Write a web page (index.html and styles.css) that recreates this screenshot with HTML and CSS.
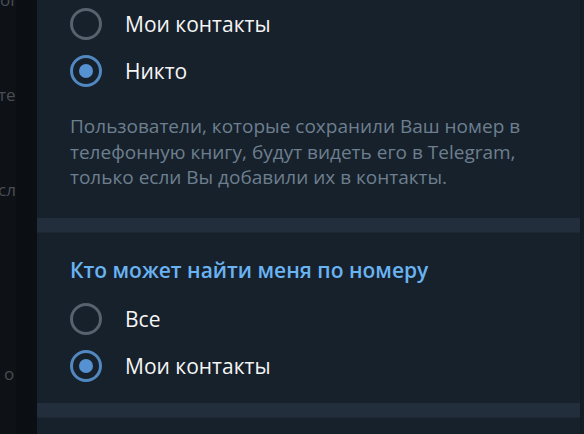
FILE: index.html
```html
<!DOCTYPE html>
<html lang="ru">
<head>
<meta charset="utf-8">
<link rel="stylesheet" href="styles.css">
</head>
<body>
<div class="app">
  <aside class="side">
    <div class="side-col">
      <span class="frag frag-top">ol</span>
      <span class="frag frag-2">те</span>
      <span class="frag frag-3">сл</span>
      <span class="frag frag-4">о</span>
    </div>
    <div class="side-gap"></div>
  </aside>
  <main class="panel">
    <section class="section first">
      <div class="row">
        <svg class="radio" viewBox="0 0 32 32"><circle cx="16" cy="16" r="14.5" class="ring-off"/></svg>
        <span class="label">Мои контакты</span>
      </div>
      <div class="row">
        <svg class="radio" viewBox="0 0 32 32"><circle cx="16" cy="16" r="14.5" class="ring-on"/><circle cx="16" cy="16" r="7" class="dot"/></svg>
        <span class="label">Никто</span>
      </div>
      <p class="about">Пользователи, которые сохранили Ваш номер в телефонную книгу, будут видеть его в Telegram, только если Вы добавили их в контакты.</p>
    </section>
    <div class="sep"></div>
    <section class="section second">
      <h2 class="title">Кто может найти меня по номеру</h2>
      <div class="row">
        <svg class="radio" viewBox="0 0 32 32"><circle cx="16" cy="16" r="14.5" class="ring-off"/></svg>
        <span class="label">Все</span>
      </div>
      <div class="row">
        <svg class="radio" viewBox="0 0 32 32"><circle cx="16" cy="16" r="14.5" class="ring-on"/><circle cx="16" cy="16" r="7" class="dot"/></svg>
        <span class="label">Мои контакты</span>
      </div>
    </section>
    <div class="sep"></div>
  </main>
  <div class="edge"></div>
</div>
</body>
</html>
```
FILE: styles.css
```css
html, body {
  margin: 0;
  padding: 0;
  background: #17212b;
}
body {
  width: 584px;
  height: 434px;
  overflow: hidden;
  font-family: "Open Sans", "Noto Sans", sans-serif;
}
.app {
  display: flex;
  height: 434px;
}
.side {
  width: 37px;
  flex: none;
  display: flex;
  background: #0d1014;
}
.side-col {
  width: 16px;
  overflow: hidden;
  display: flex;
  flex-direction: column;
  background: #0e1115;
}
.side-gap {
  flex: 1;
  background: #0b0e12;
}
.frag {
  font-size: 17px;
  line-height: 24px;
  color: #474e57;
  white-space: nowrap;
  display: block;
}
.frag-top { margin-top: -12px; }
.frag-2 { margin-top: 71px; margin-left: -2px; }
.frag-3 { margin-top: 71px; margin-left: -2px; }
.frag-4 { margin-top: 160px; margin-left: 4px; }

.panel {
  width: 543px;
  flex: none;
  background: #17212b;
  display: flex;
  flex-direction: column;
}
.edge {
  flex: 1;
  background: #141c25;
  border-left: 1px solid #121920;
}
.section {
  padding-left: 33px;
  padding-right: 20px;
}
.first {
  padding-bottom: 27px;
}
.second {
  padding-top: 24px;
  padding-bottom: 13px;
}
.row {
  height: 47px;
  display: flex;
  align-items: center;
  gap: 23px;
}
.radio {
  width: 32px;
  height: 32px;
  flex: none;
}
.ring-off {
  fill: none;
  stroke: #57626e;
  stroke-width: 3;
}
.ring-on {
  fill: none;
  stroke: #5288c1;
  stroke-width: 3;
}
.dot {
  fill: #5691d2;
}
.label {
  font-size: 21px;
  color: #f5f5f5;
  line-height: 28px;
}
.about {
  margin: 20px 0 0;
  font-size: 19px;
  line-height: 25.5px;
  color: #6d7f8f;
}
.title {
  margin: 0 0 13px;
  font-size: 21px;
  line-height: 26px;
  font-weight: 600;
  color: #6ab3f3;
}
.sep {
  height: 14px;
  background: #232e3c;
  border-bottom: 1px solid #1e2733;
  flex: none;
}
```
